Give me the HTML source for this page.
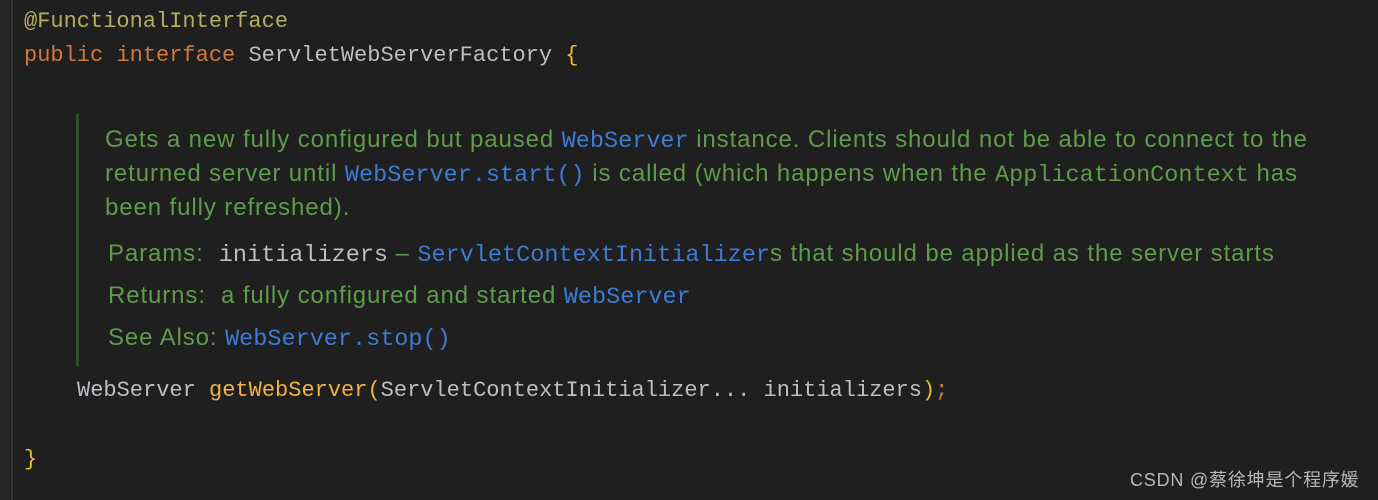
<!DOCTYPE html>
<html><head><meta charset="utf-8"><style>
html,body{margin:0;padding:0}
body{width:1378px;height:500px;background:#1f1f1f;position:relative;overflow:hidden}
.gut{position:absolute;left:0;top:0;width:10px;height:500px;background:#262626}
.gl{position:absolute;left:11px;top:0;width:2px;height:500px;background:#333}
.l{position:absolute;white-space:pre;line-height:30px}
.m{font-family:"Liberation Mono",monospace;font-size:22px}
.d{font-family:"Liberation Sans",sans-serif;font-size:24px;letter-spacing:0.9px;color:#5f9b4c}
.b{color:#3e7bd4;font-family:"Liberation Mono",monospace;font-size:23.5px;letter-spacing:0}
.w{color:#bcbec4;font-family:"Liberation Mono",monospace;font-size:23.5px;letter-spacing:0}
.bar{position:absolute;left:76px;top:114px;width:3px;height:252px;background:#344a31}
</style></head><body>
<div class="gut"></div><div class="gl"></div>
<div class="l m" style="left:24px;top:7px;color:#b3ae60">@FunctionalInterface</div>
<div class="l m" style="left:24px;top:41px"><span style="color:#d2783c">public interface </span><span style="color:#bcbec4">ServletWebServerFactory </span><span style="color:#e8ba36">{</span></div>
<div class="bar"></div>
<div class="l d" style="left:105px;top:125px">Gets a new fully configured but paused <span class="b">WebServer</span> instance. Clients should not be able to connect to the</div>
<div class="l d" style="left:105px;top:159px">returned server until <span class="b">WebServer.start()</span> is called (which happens when the <span class="w" style="color:#5f9b4c">ApplicationContext</span> has</div>
<div class="l d" style="left:105px;top:193px">been fully refreshed).</div>
<div class="l d" style="left:108px;top:239px">Params:  <span class="w">initializers</span> – <span class="b">ServletContextInitializer</span>s that should be applied as the server starts</div>
<div class="l d" style="left:108px;top:281px">Returns:  a fully configured and started <span class="b">WebServer</span></div>
<div class="l d" style="left:108px;top:323px">See Also: <span class="b">WebServer.stop()</span></div>
<div class="l m" style="left:77px;top:376px;color:#bcbec4">WebServer <span style="color:#f0b04a">getWebServer</span><span style="color:#e8ba36">(</span>ServletContextInitializer... initializers<span style="color:#e8ba36">)</span><span style="color:#d2783c">;</span></div>
<div class="l m" style="left:24px;top:445px;color:#e8ba36">}</div>
<div class="l" style="left:1130px;top:465px;font-family:'Liberation Sans','Noto Sans CJK SC',sans-serif;font-size:18px;color:#b8b8b8;letter-spacing:0.8px">CSDN @蔡徐坤是个程序媛</div>
</body></html>
